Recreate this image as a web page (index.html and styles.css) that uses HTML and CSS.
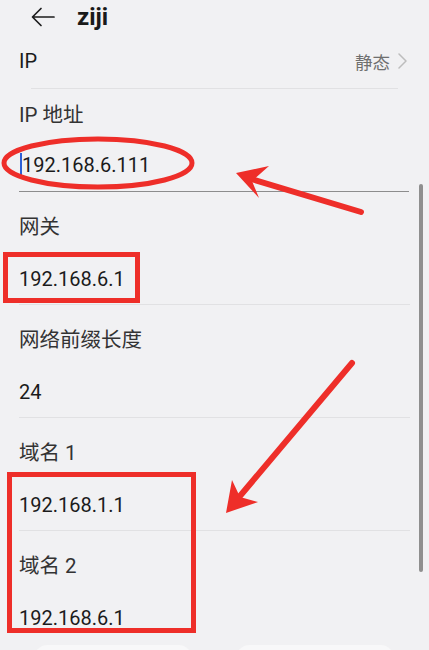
FILE: index.html
```html
<!DOCTYPE html>
<html lang="zh">
<head>
<meta charset="utf-8">
<link rel="stylesheet" href="styles.css">
</head>
<body>
<div class="screen">
  <header class="appbar">
    <svg class="back" width="24" height="20" viewBox="0 0 24 20"><path d="M23 10H2M10 1.5 1.5 10 10 18.5" fill="none" stroke="#1d1d1d" stroke-width="1.7" stroke-linecap="round" stroke-linejoin="round"/></svg>
    <span class="title">ziji</span>
  </header>
  <div class="row-ip">
    <span class="ip-label">IP</span>
    <span class="ip-value">静态<svg class="chev" width="9" height="16" viewBox="0 0 9 16"><path d="M1 1l7 7-7 7" fill="none" stroke="#bdbdbd" stroke-width="1.5" stroke-linecap="round" stroke-linejoin="round"/></svg></span>
  </div>
  <div class="divider inset"></div>
  <section class="group first">
    <div class="label">IP 地址</div>
    <div class="value"><span class="cursor"></span>192.168.6.111</div>
  </section>
  <div class="underline"></div>
  <section class="group">
    <div class="label">网关</div>
    <div class="value">192.168.6.1</div>
  </section>
  <div class="divider"></div>
  <section class="group">
    <div class="label">网络前缀长度</div>
    <div class="value">24</div>
  </section>
  <div class="divider"></div>
  <section class="group">
    <div class="label">域名 1</div>
    <div class="value">192.168.1.1</div>
  </section>
  <div class="divider"></div>
  <section class="group">
    <div class="label">域名 2</div>
    <div class="value">192.168.6.1</div>
  </section>
  <div class="footer">
    <div class="btn"></div>
    <div class="btn"></div>
  </div>
  <div class="scrollbar"></div>
  <svg class="marks" width="429" height="650" viewBox="0 0 429 650">
    <g fill="none" stroke="#ee2e29" stroke-width="5">
      <ellipse cx="98" cy="163" rx="94" ry="24"/>
      <rect x="5.5" y="254.5" width="132" height="46"/>
      <rect x="9.5" y="474.5" width="184" height="156"/>
    </g>
    <g stroke="#ee2e29" stroke-width="6" stroke-linecap="round">
      <line x1="361" y1="212" x2="248" y2="178"/>
      <line x1="352" y1="363" x2="240" y2="496"/>
    </g>
    <g fill="#ee2e29">
      <polygon points="236,173 269,166 252,181 259,198"/>
      <polygon points="226,513 232,480 240,497 258,502"/>
    </g>
  </svg>
</div>
</body>
</html>
```
FILE: styles.css
```css
html, body {
  margin: 0;
  padding: 0;
  background: #f1f1f3;
}
.screen {
  position: relative;
  width: 429px;
  height: 650px;
  overflow: hidden;
  background: #f1f1f3;
  font-family: Roboto, "Noto Sans CJK SC", sans-serif;
  color: #1b1b1b;
}
.appbar {
  display: flex;
  align-items: center;
  height: 34px;
  padding-left: 31px;
}
.back {
  display: block;
}
.title {
  margin-left: 22px;
  font-size: 24px;
  font-weight: 700;
  line-height: 34px;
  color: #1a1a1a;
}
.row-ip {
  display: flex;
  align-items: center;
  justify-content: space-between;
  height: 54px;
  padding: 0 22px 0 19px;
}
.ip-label {
  font-size: 20px;
  color: #1b1b1b;
}
.ip-value {
  display: flex;
  align-items: center;
  gap: 8px;
  font-size: 17.5px;
  color: #6f6f6f;
}
.chev {
  display: block;
}
.divider {
  height: 1px;
  margin: 0 19px 0 19px;
  background: #e1e1e3;
}
.divider.inset {
  margin: 0 31px 0 31px;
}
.group {
  padding: 21px 19px 11px 19px;
  display: flex;
  flex-direction: column;
  gap: 24px;
}
.group.first {
  padding-top: 12px;
  padding-bottom: 12px;
  gap: 22px;
}
.label {
  font-size: 20.5px;
  line-height: 28px;
  color: #333333;
}
.value {
  font-size: 20px;
  line-height: 28px;
  color: #1b1b1b;
  display: flex;
  align-items: center;
}
.cursor {
  display: inline-block;
  width: 2px;
  height: 24px;
  margin-left: 1px;
  background: #2c5fd6;
}
.underline {
  height: 1px;
  margin: 0 20px 0 19px;
  background: #8d8d8d;
}
.footer {
  display: flex;
  gap: 42px;
  padding: 2px 34px 0 33px;
}
.btn {
  flex: 1;
  height: 30px;
  border-radius: 16px;
  background: #f8f8f9;
}
.scrollbar {
  position: absolute;
  left: 419px;
  top: 184px;
  width: 4px;
  height: 388px;
  border-radius: 2px;
  background: #8f8f8f;
}
.marks {
  position: absolute;
  left: 0;
  top: 0;
  pointer-events: none;
}
```
